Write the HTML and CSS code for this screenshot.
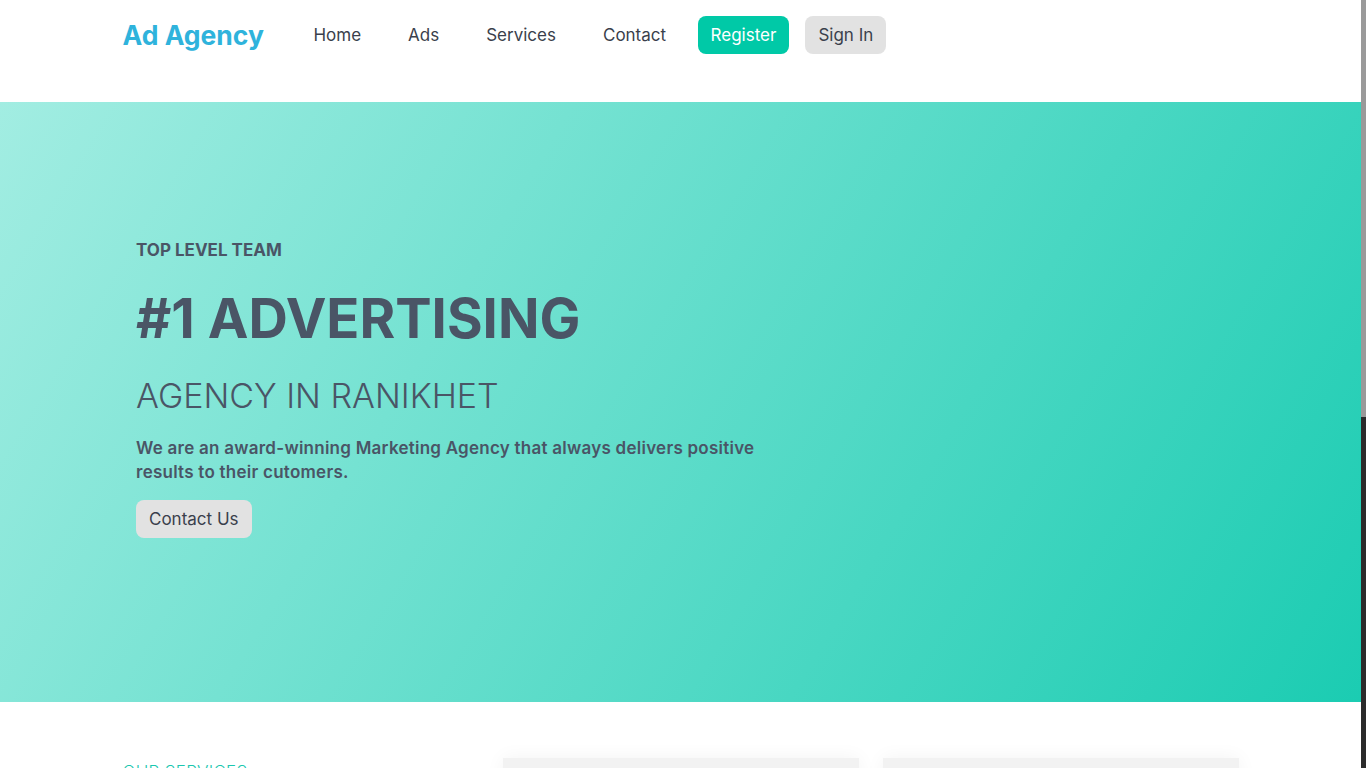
FILE: index.html
```html
<!DOCTYPE html>
<html lang="en">
<head>
<meta charset="utf-8">
<title>Ad Agency</title>
<link rel="stylesheet" href="styles.css">
</head>
<body>
<header class="site-header">
  <div class="container nav-row">
    <a class="brand" href="#">Ad Agency</a>
    <nav class="nav">
      <a class="nav-link" href="#">Home</a>
      <a class="nav-link" href="#">Ads</a>
      <a class="nav-link" href="#">Services</a>
      <a class="nav-link" href="#">Contact</a>
      <a class="btn btn-primary" href="#">Register</a>
      <a class="btn btn-light" href="#">Sign In</a>
    </nav>
  </div>
</header>

<section class="hero">
  <div class="container">
    <div class="hero-content">
      <p class="eyebrow">TOP LEVEL TEAM</p>
      <h1 class="hero-title">#1 ADVERTISING</h1>
      <h2 class="hero-subtitle">AGENCY IN RANIKHET</h2>
      <p class="hero-text">We are an award-winning Marketing Agency that always delivers positive results to their cutomers.</p>
      <a class="btn btn-light" href="#">Contact Us</a>
    </div>
  </div>
</section>

<section class="services">
  <div class="container services-grid">
    <div class="services-intro">
      <h3 class="section-label">OUR SERVICES</h3>
    </div>
    <div class="card"></div>
    <div class="card"></div>
    <div class="card"></div>
    <div class="card"></div>
    <div class="card"></div>
  </div>
</section>

<div class="fake-scrollbar" aria-hidden="true"><div class="fake-thumb"></div></div>
</body>
</html>
```

FILE: styles.css
```css
* { box-sizing: border-box; }

html::-webkit-scrollbar { display: none; }

body {
  margin: 0;
  padding-right: 5px;
  font-family: "Inter", "DejaVu Sans", sans-serif;
  color: #4a5566;
  background: #fff;
}

a { text-decoration: none; }

.container {
  max-width: 1140px;
  margin: 0 auto;
  padding: 0 12px;
}

/* Fake scrollbar overlay */
.fake-scrollbar {
  position: fixed;
  top: 0;
  right: 0;
  width: 5px;
  height: 100vh;
  background: #2b2b2b;
}

.fake-thumb {
  height: 417px;
  background: #9a9a9a;
}

/* Header */
.site-header {
  height: 102px;
  padding-top: 16px;
  background: #fff;
}

.nav-row {
  display: flex;
  align-items: center;
  height: 38px;
}

.brand {
  font-size: 26.5px;
  font-weight: 700;
  color: #2fb3dc;
  margin-right: 26px;
}

.nav {
  display: flex;
  align-items: center;
}

.nav-link {
  font-size: 17px;
  color: #3a3f4c;
  padding: 0 23.5px;
}

.btn {
  display: inline-flex;
  align-items: center;
  height: 38px;
  padding: 0 13px;
  border-radius: 8px;
  font-size: 17px;
}

.nav .btn { margin: 0 8px; }

.btn-primary {
  background: #00c9a7;
  color: #fff;
}

.btn-light {
  background: #e2e2e2;
  color: #3a3f4c;
}

/* Hero */
.hero {
  height: 600px;
  background: linear-gradient(121deg, #a2ede2 0%, #1bccb2 100%);
  padding-top: 136px;
}

.hero-content {
  padding-left: 13.5px;
  max-width: 680px;
}

.eyebrow {
  margin: 0;
  font-size: 17px;
  font-weight: 700;
  line-height: 24px;
}

.hero-title {
  margin: 24px 0 0;
  font-size: 54.5px;
  font-weight: 700;
  line-height: 64px;
}

.hero-subtitle {
  margin: 24px 0 0;
  font-size: 34px;
  font-weight: 300;
  line-height: 44px;
}

.hero-text {
  margin: 18px 0 16px;
  font-size: 17px;
  font-weight: 600;
  line-height: 24px;
  letter-spacing: 0.25px;
}

/* Services */
.services {
  padding: 56px 0 56px;
}

.services-grid {
  display: grid;
  grid-template-columns: repeat(3, 1fr);
  gap: 24px;
}

.section-label {
  margin: 4px 0 0;
  font-size: 17px;
  font-weight: 300;
  color: #1cc7b0;
  letter-spacing: 0.3px;
}

.card {
  height: 280px;
  background: #f2f2f2;
  box-shadow: 0 0 18px rgba(0, 0, 0, 0.05);
}
```
